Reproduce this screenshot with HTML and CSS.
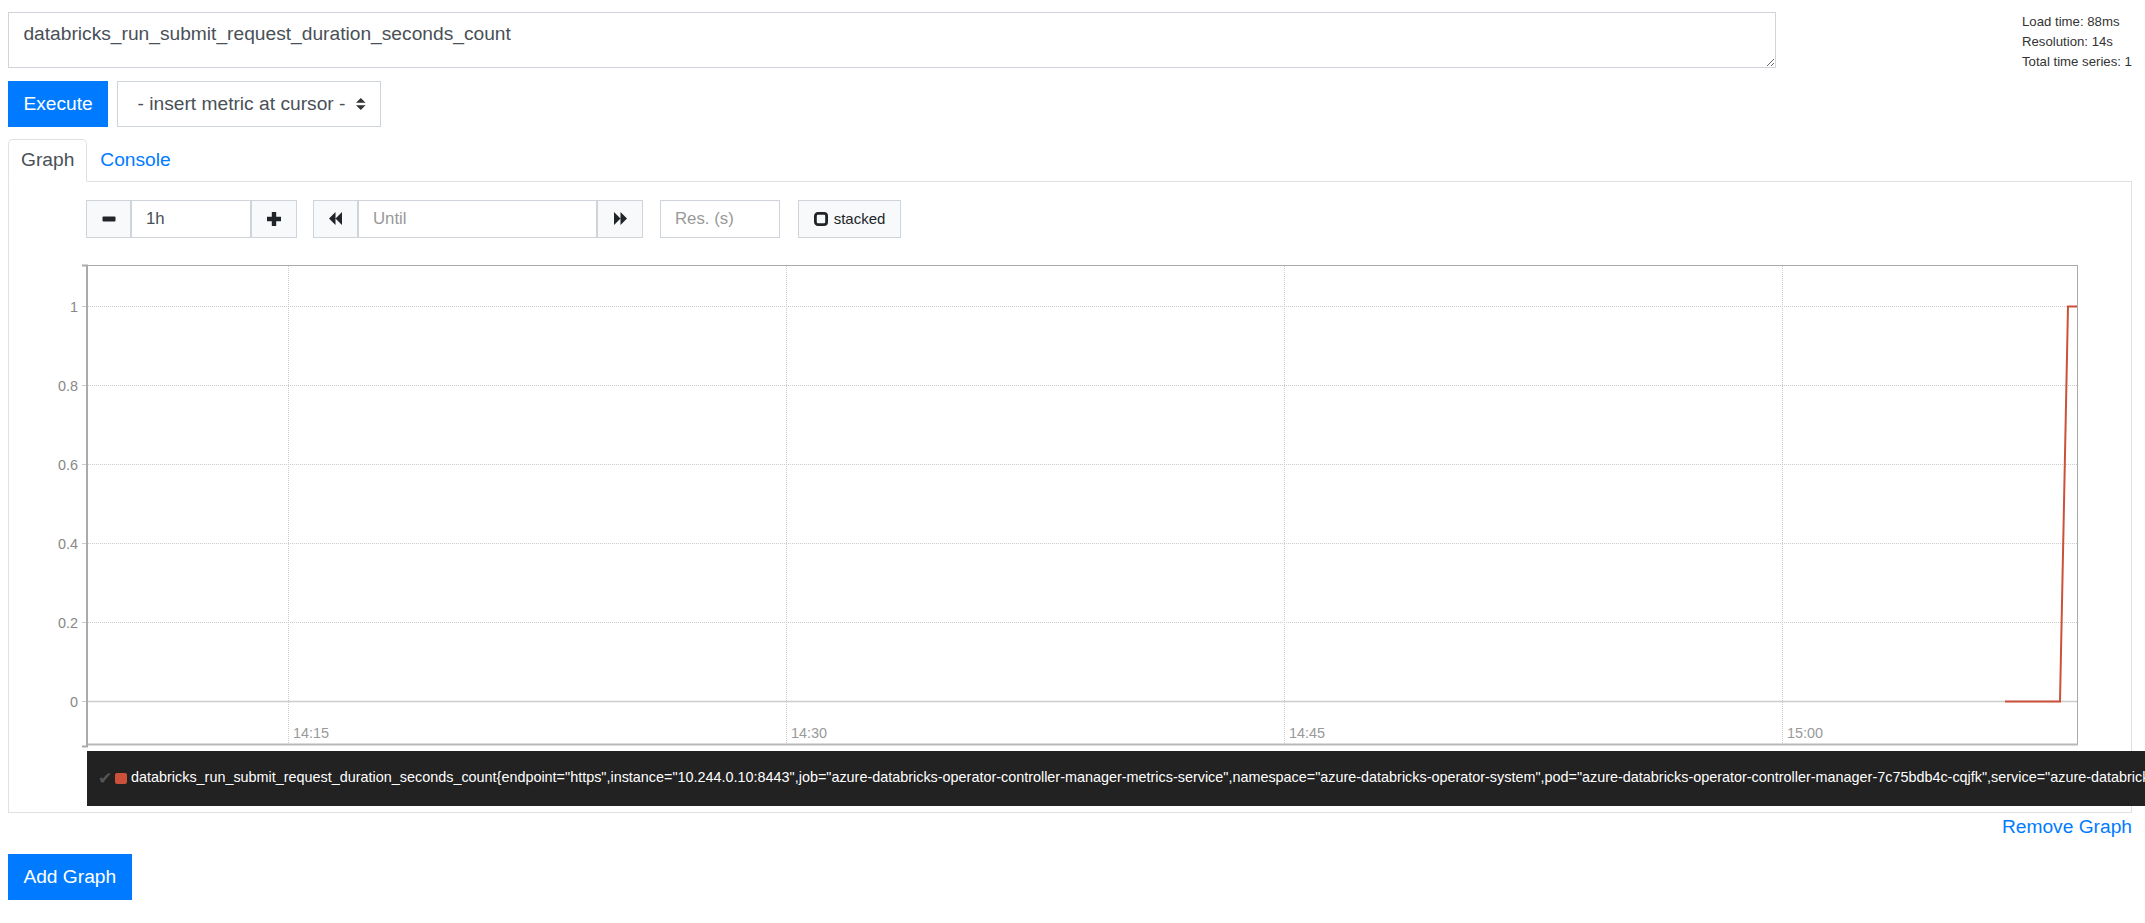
FILE: index.html
```html
<!DOCTYPE html>
<html lang="en">

<head>
    <meta charset="UTF-8">
    <meta name="viewport" content="width=device-width, initial-scale=1.0">
    <title>Prometheus Time Series Collection and Processing Server</title>
    <link rel="stylesheet" href="styles.css">
</head>

<body>

    <div class="query-row">
        <textarea class="expression" rows="1">databricks_run_submit_request_duration_seconds_count</textarea>
        <div class="eval-stats">
            <div>Load time: 88ms</div>
            <div>Resolution: 14s</div>
            <div>Total time series: 1</div>
        </div>
    </div>

    <div class="execute-row">
        <button class="btn btn-primary">Execute</button>
        <div class="metric-select">
            <select>
                <option>- insert metric at cursor -</option>
            </select>
            <svg class="select-arrows" viewBox="0 0 4 5" width="9.6" height="12">
                <path d="M2 0L0 2h4zm0 5L0 3h4z" />
            </svg>
        </div>
    </div>

    <ul class="nav-tabs">
        <li><a class="nav-link active" href="#">Graph</a></li>
        <li><a class="nav-link" href="#">Console</a></li>
    </ul>

    <div class="tab-content">
        <div class="graph-controls">
            <div class="input-group">
                <button class="control-btn" title="Shrink the time range.">
                    <svg width="14" height="14" viewBox="0 0 14 14"><rect x="0.5" y="4.6" width="13" height="5" rx="1" /></svg>
                </button>
                <input class="control-input range-input" value="1h">
                <button class="control-btn plus-btn" title="Expand the time range.">
                    <svg width="14" height="14" viewBox="0 0 14 14"><path d="M4.8 0h4.4v4.8H14v4.4H9.2V14H4.8V9.2H0V4.8h4.8z" /></svg>
                </button>
            </div>
            <div class="input-group">
                <button class="control-btn" title="Rewind the end time.">
                    <svg width="13" height="13" viewBox="0 0 13 13"><path d="M0 6.5L6.5 0v13zM6.5 6.5L13 0v13z" /></svg>
                </button>
                <input class="control-input until-input" placeholder="Until">
                <button class="control-btn fwd-btn" title="Advance the end time.">
                    <svg width="13" height="13" viewBox="0 0 13 13"><path d="M13 6.5L6.5 0v13zM6.5 6.5L0 0v13z" /></svg>
                </button>
            </div>
            <input class="control-input res-input" placeholder="Res. (s)">
            <button class="control-btn stacked-btn">
                <svg width="14" height="14" viewBox="0 0 14 14"><rect x="1.4" y="1.4" width="11.2" height="11.2" rx="2.6" fill="none" stroke="#212529" stroke-width="2.8" /></svg>
                <span>stacked</span>
            </button>
        </div>

        <svg class="chart" width="2070" height="490" viewBox="0 0 2070 490">
            <g class="grid">
                <line x1="79" y1="46.5" x2="2068" y2="46.5" />
                <line x1="79" y1="125.5" x2="2068" y2="125.5" />
                <line x1="79" y1="204.5" x2="2068" y2="204.5" />
                <line x1="79" y1="283.5" x2="2068" y2="283.5" />
                <line x1="79" y1="362.5" x2="2068" y2="362.5" />
                <line x1="279.5" y1="6" x2="279.5" y2="484" />
                <line x1="777.5" y1="6" x2="777.5" y2="484" />
                <line x1="1275.5" y1="6" x2="1275.5" y2="484" />
                <line x1="1773.5" y1="6" x2="1773.5" y2="484" />
            </g>
            <line class="zero-line" x1="79" y1="441.5" x2="2068" y2="441.5" />
            <g class="y-ticks">
                <line x1="73" y1="46.5" x2="77" y2="46.5" />
                <line x1="73" y1="125.5" x2="77" y2="125.5" />
                <line x1="73" y1="204.5" x2="77" y2="204.5" />
                <line x1="73" y1="283.5" x2="77" y2="283.5" />
                <line x1="73" y1="362.5" x2="77" y2="362.5" />
                <line x1="73" y1="441.5" x2="77" y2="441.5" />
            </g>
            <rect class="frame" x="78.5" y="5.5" width="1990" height="479" />
            <line class="x-domain" x1="78" y1="484.5" x2="2069" y2="484.5" />
            <path class="y-domain" d="M73 5.5H78V486.5H73" />
            <g class="y-labels">
                <text x="69" y="51.5">1</text>
                <text x="69" y="130.5">0.8</text>
                <text x="69" y="209.5">0.6</text>
                <text x="69" y="288.5">0.4</text>
                <text x="69" y="367.5">0.2</text>
                <text x="69" y="446.5">0</text>
            </g>
            <g class="x-labels">
                <text x="284" y="478">14:15</text>
                <text x="782" y="478">14:30</text>
                <text x="1280" y="478">14:45</text>
                <text x="1778" y="478">15:00</text>
            </g>
            <path class="series" d="M1996 441.5H2051L2059 46.5H2068" />
        </svg>

        <div class="legend">
            <span class="legend-check">✔</span>
            <span class="legend-swatch"></span>
            <span>databricks_run_submit_request_duration_seconds_count{endpoint="https",instance="10.244.0.10:8443",job="azure-databricks-operator-controller-manager-metrics-service",namespace="azure-databricks-operator-system",pod="azure-databricks-operator-controller-manager-7c75bdb4c-cqjfk",service="azure-databricks-operator-controller-manager-metrics-service"}</span>
        </div>
    </div>

    <div class="remove-row">
        <a class="remove-graph" href="#">Remove Graph</a>
    </div>

    <button class="btn btn-primary add-graph">Add Graph</button>

</body>

</html>
```

FILE: styles.css
```css
html {
    overflow-x: hidden;
}

body {
    margin: 0;
    padding: 12px 13px 0 8px;
    font-family: "Liberation Sans", Arial, sans-serif;
    font-size: 19.2px;
    line-height: 1.5;
    color: #212529;
    background: #ffffff;
}

/* expression + stats */

.query-row {
    display: flex;
    align-items: flex-start;
    height: 56px;
}

.expression {
    flex: 1;
    height: 56px;
    margin: 0;
    padding: 7.2px 14.4px;
    box-sizing: border-box;
    border: 1px solid #ced4da;
    border-radius: 0;
    font: inherit;
    color: #495057;
    resize: vertical;
    overflow: hidden;
}

.eval-stats {
    width: 110px;
    margin-left: 246px;
    font-size: 13.2px;
    line-height: 20px;
    white-space: nowrap;
    color: #333333;
}

.execute-row {
    display: flex;
    gap: 9px;
    margin-top: 13px;
}

.btn {
    height: 46px;
    padding: 0 14.4px;
    border: 1px solid transparent;
    border-radius: 0;
    font: inherit;
    line-height: 44px;
    cursor: pointer;
}

.btn-primary {
    background: #007bff;
    border-color: #007bff;
    color: #ffffff;
}

.metric-select {
    position: relative;
}

.metric-select select {
    -webkit-appearance: none;
    appearance: none;
    width: 264px;
    height: 46px;
    margin: 0;
    padding: 0 28px 0 19.4px;
    border: 1px solid #ced4da;
    border-radius: 0;
    background: #ffffff;
    font: inherit;
    color: #495057;
}

.select-arrows {
    position: absolute;
    right: 15.4px;
    top: 50%;
    margin-top: -6px;
    fill: #333333;
    pointer-events: none;
}

/* tabs */

.nav-tabs {
    display: flex;
    list-style: none;
    margin: 12px 0 0;
    padding: 0;
    border-bottom: 1px solid #dee2e6;
}

.nav-link {
    display: block;
    margin-bottom: -1px;
    padding: 6px 12px;
    border: 1px solid transparent;
    border-radius: 4.8px 4.8px 0 0;
    line-height: 28.8px;
    color: #007bff;
    text-decoration: none;
}

.nav-link.active {
    color: #495057;
    background: #ffffff;
    border-color: #dee2e6 #dee2e6 #ffffff;
}

.tab-content {
    padding: 18px 0 6px;
    border: 1px solid #dee2e6;
    border-top: 0;
}

/* graph controls */

.graph-controls {
    display: flex;
    gap: 16px;
    height: 38px;
    margin-left: 77px;
}

.input-group {
    display: flex;
}

.input-group > * + * {
    margin-left: -1px;
}

.control-btn {
    display: flex;
    align-items: center;
    justify-content: center;
    width: 45px;
    height: 38px;
    margin: 0;
    padding: 0;
    box-sizing: border-box;
    border: 1px solid #ced4da;
    border-radius: 0;
    background: #f8f9fa;
    fill: #212529;
    color: #212529;
    font-family: inherit;
    cursor: pointer;
}

.plus-btn {
    width: 46px;
}

.fwd-btn {
    width: 46px;
}

.control-input {
    height: 38px;
    margin: 0;
    padding: 0 14px;
    box-sizing: border-box;
    border: 1px solid #ced4da;
    border-radius: 0;
    font-family: inherit;
    font-size: 16.8px;
    color: #495057;
}

.control-input::placeholder {
    color: #999999;
}

.range-input {
    width: 120px;
}

.until-input {
    width: 239px;
}

.res-input {
    width: 120px;
    margin-left: 1px;
}

.stacked-btn {
    gap: 6px;
    width: 103px;
    margin-left: 2px;
    font-size: 15px;
}

/* chart */

.chart {
    display: block;
    margin-top: 22px;
}

.chart text {
    font-family: "Liberation Sans", Arial, sans-serif;
    font-size: 14.4px;
}

.grid line {
    stroke: #cccccc;
    stroke-width: 1;
    stroke-dasharray: 1 1;
}

.zero-line {
    stroke: #cccccc;
    stroke-width: 1.5;
}

.y-ticks line {
    stroke: #cccccc;
    stroke-width: 1;
}

.frame {
    fill: none;
    stroke: #aaaaaa;
    stroke-width: 1;
}

.x-domain {
    stroke: #b8b8b8;
    stroke-width: 2;
}

.y-domain {
    fill: none;
    stroke: #aaaaaa;
    stroke-width: 2;
}

.y-labels text {
    text-anchor: end;
    fill: #888888;
}

.x-labels text {
    fill: #999999;
}

.series {
    fill: none;
    stroke: #cb513a;
    stroke-width: 2;
}

/* legend */

.legend {
    display: flex;
    align-items: center;
    width: max-content;
    height: 55px;
    margin: 1px 0 0 78px;
    padding: 0 11px;
    background: #222222;
    color: #ffffff;
    font-size: 14.4px;
    white-space: nowrap;
}

.legend-check {
    width: 14px;
    color: #555555;
    font-family: "DejaVu Sans", sans-serif;
    font-size: 17px;
    line-height: 1;
}

.legend-swatch {
    width: 12px;
    height: 11px;
    margin: 0 4px 0 3px;
    border-radius: 2px;
    background: #cb513a;
}

.remove-row {
    text-align: right;
}

.remove-graph {
    color: #007bff;
    text-decoration: none;
}

.add-graph {
    display: block;
    margin-top: 12px;
}
```
